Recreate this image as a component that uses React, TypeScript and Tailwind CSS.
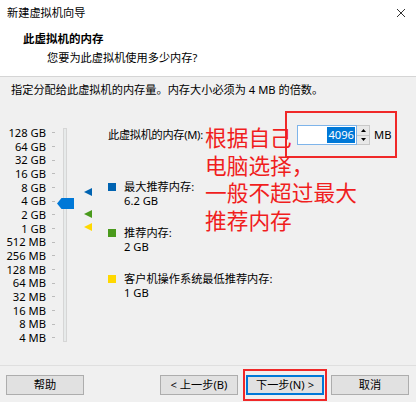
import React from "react";

const font = { fontFamily: '"Noto Sans", "Noto Sans CJK SC", sans-serif' };

const LABELS = [
  "128 GB", "64 GB", "32 GB", "16 GB", "8 GB", "4 GB", "2 GB", "1 GB",
  "512 MB", "256 MB", "128 MB", "64 MB", "32 MB", "16 MB", "8 MB", "4 MB",
];

function Marker({ color, top }: { color: string; top: number }) {
  return (
    <svg width="8" height="8" viewBox="0 0 8 8" className="absolute left-0" style={{ top }}>
      <polygon points="0,4 8,0 8,8" fill={color} />
    </svg>
  );
}

function Legend({ color, title, value }: { color: string; title: string; value: string }) {
  return (
    <div className="flex items-start gap-[8px] leading-[14px]">
      <div className={`mt-[3px] h-[8px] w-[8px] ${color}`} />
      <div>
        <div>{title}</div>
        <div>{value}</div>
      </div>
    </div>
  );
}

function Btn({ children, focused = false }: { children: React.ReactNode; focused?: boolean }) {
  return (
    <div
      className={`flex h-[20px] w-[78px] items-center justify-center bg-[#e1e1e1] ${
        focused ? "border-2 border-[#0078d7]" : "border border-[#adadad]"
      }`}
    >
      {children}
    </div>
  );
}

export default function App() {
  return (
    <div className="relative flex h-[402px] w-[416px] flex-col overflow-hidden bg-[#f0f0f0] text-[11.2px] text-black" style={font}>
      {/* title bar */}
      <div className="flex h-[26px] items-center justify-between bg-white pl-[7px] pr-[10px]">
        <span>新建虚拟机向导</span>
        <svg width="10" height="10" viewBox="0 0 10 10">
          <path d="M1 1 L9 9 M9 1 L1 9" stroke="#333" strokeWidth="1" />
        </svg>
      </div>

      {/* header */}
      <div className="h-[51px] border-b border-[#d5d5d5] bg-white pt-[5px] leading-[16px]">
        <div className="pl-[23px] text-[11.5px] font-bold">此虚拟机的内存</div>
        <div className="mt-[3px] pl-[47px]">您要为此虚拟机使用多少内存?</div>
      </div>

      {/* body */}
      <div className="flex-1">
        <div className="px-[11px] pt-[5px] leading-[16px]">
          指定分配给此虚拟机的内存量。内存大小必须为 4 MB 的倍数。
        </div>

        <div className="mt-[27px] flex">
          {/* slider */}
          <div className="flex pt-[1px]">
            <div className="flex w-[46px] flex-col text-right">
              {LABELS.map((l) => (
                <div key={l} className="h-[13.67px] whitespace-nowrap leading-[13.67px]">
                  {l}
                </div>
              ))}
            </div>
            <div className="ml-[6px] flex w-[3px] flex-col">
              {LABELS.map((l) => (
                <div key={l} className="flex h-[13.67px] items-center">
                  <div className="h-[1px] w-[3px] bg-[#bcbcbc]" />
                </div>
              ))}
            </div>
            <div className="relative ml-[8px] mt-[2px] h-[214px] w-[4px] border border-[#d6d6d6] bg-[#e7eaea]">
              <svg width="17" height="11" viewBox="0 0 17 11" className="absolute left-[-7px] top-[69px]">
                <polygon points="0,5.5 4.5,0 17,0 17,11 4.5,11" fill="#0078d7" />
              </svg>
            </div>
            <div className="relative ml-[17px] h-[216px] w-[8px]">
              <Marker color="#0063b1" top={62} />
              <Marker color="#4a9a1c" top={84} />
              <Marker color="#ffd800" top={97} />
            </div>
          </div>

          {/* right side */}
          <div className="ml-[16px] flex flex-col">
            <div className="flex h-[20px] items-center">
              <div className="w-[189px] whitespace-nowrap tracking-[-0.3px]">此虚拟机的内存(M):</div>
              <div className="flex h-[20px] w-[60px] items-center justify-end border border-[#7eb4ea] bg-white pr-[1px]">
                <span className="bg-[#0078d7] px-[1px] leading-[16px] text-white">4096</span>
              </div>
              <div className="flex h-[20px] w-[13px] flex-col border-y border-r border-[#c8c8c8] bg-[#e8e8e8]">
                <div className="flex flex-1 items-center justify-center border-b border-[#c8c8c8]">
                  <svg width="5" height="3" viewBox="0 0 5 3"><polygon points="0,3 2.5,0 5,3" fill="#000" /></svg>
                </div>
                <div className="flex flex-1 items-center justify-center">
                  <svg width="5" height="3" viewBox="0 0 5 3"><polygon points="0,0 5,0 2.5,3" fill="#000" /></svg>
                </div>
              </div>
              <span className="ml-[4px]">MB</span>
            </div>

            <div className="mt-[35px] flex flex-col gap-[18px]">
              <Legend color="bg-[#0063b1]" title="最大推荐内存:" value="6.2 GB" />
              <Legend color="bg-[#4a9a1c]" title="推荐内存:" value="2 GB" />
              <Legend color="bg-[#ffd800]" title="客户机操作系统最低推荐内存:" value="1 GB" />
            </div>
          </div>
        </div>
      </div>

      {/* footer */}
      <div className="flex h-[37px] items-start border-t border-[#dfdfdf] pl-[6px] pt-[9px]">
        <Btn>帮助</Btn>
        <div className="ml-[76px]">
          <Btn>&lt; 上一步(B)</Btn>
        </div>
        <div className="ml-[8px]">
          <Btn focused>下一步(N) &gt;</Btn>
        </div>
        <div className="ml-[7px]">
          <Btn>取消</Btn>
        </div>
      </div>

      {/* red annotations drawn over the screenshot */}
      <div className="absolute left-[285px] top-[111px] h-[47px] w-[112px] border-2 border-[#f02828]" />
      <div className="absolute left-[243px] top-[369px] h-[32px] w-[84px] border-2 border-[#f02828]" />
      <div
        className="absolute left-[205px] top-[123px] text-[21.7px] leading-[27.7px] text-[#f01e1e]"
        style={{ fontFamily: '"Noto Sans CJK SC", sans-serif' }}
      >
        <div>根据自己</div>
        <div>电脑选择，</div>
        <div>一般不超过最大</div>
        <div>推荐内存</div>
      </div>
    </div>
  );
}
